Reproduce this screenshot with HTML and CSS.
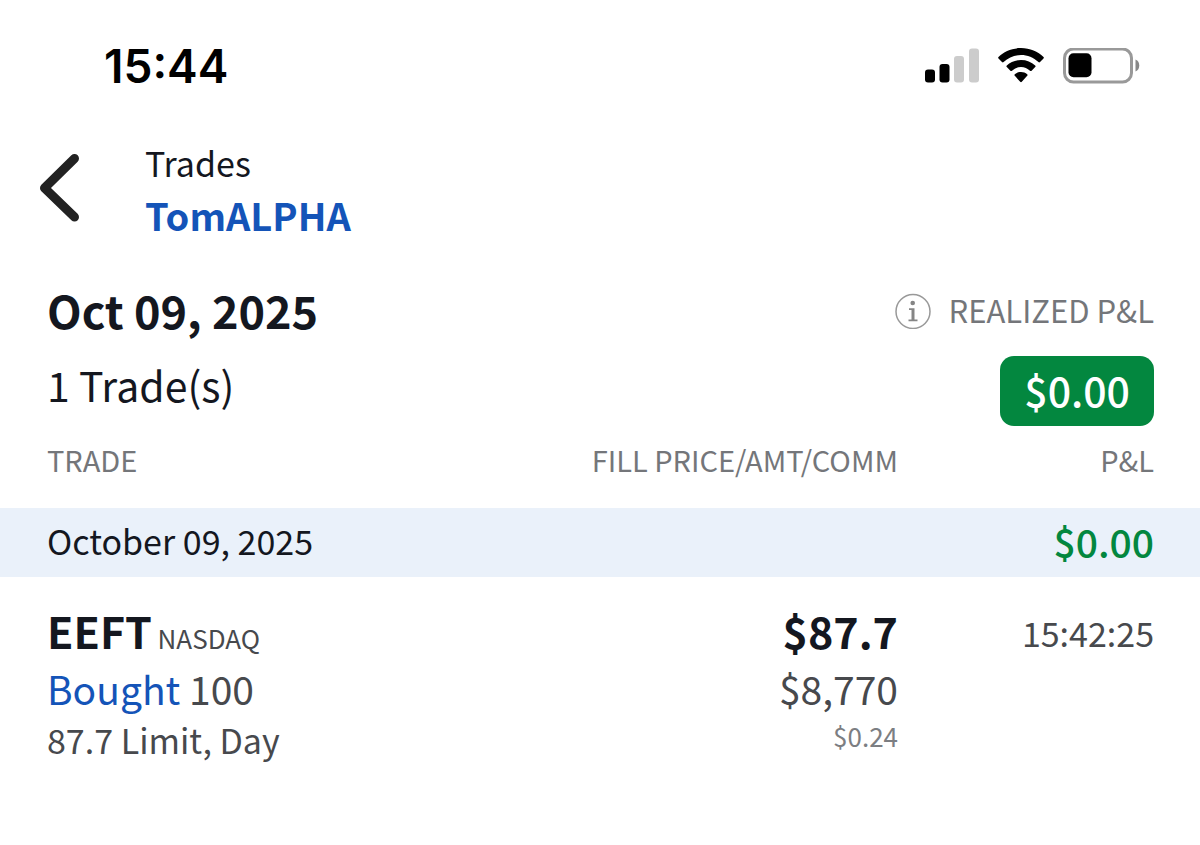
FILE: index.html
```html
<!DOCTYPE html>
<html lang="en">
<head>
<meta charset="utf-8">
<meta name="viewport" content="width=device-width, initial-scale=1">
<title>Trades</title>
<link rel="stylesheet" href="styles.css">
</head>
<body>
<div class="status-bar">
  <time class="clock">15:44</time>
  <div class="status-icons">
    <svg width="54" height="36" viewBox="0 0 54 36" role="img" aria-label="Signal: 2 of 4 bars">
      <rect x="0" y="21.500" width="10" height="13" rx="3"/>
      <rect x="14.500" y="16" width="10" height="18.500" rx="3"/>
      <rect x="29" y="8" width="10" height="26.500" rx="3" fill="#cccccc"/>
      <rect x="44" y="0.500" width="10" height="34" rx="3" fill="#cccccc"/>
    </svg>
    <svg width="46" height="36" viewBox="0 0 46 36" role="img" aria-label="Wi-Fi">
      <path d="M23 0C14 0 6 3.500 0.500 9Q-0.200 9.700 0.500 10.400L4 14Q4.800 14.800 5.600 14C10.500 9.500 16.500 7 23 7S35.500 9.500 40.400 14Q41.200 14.800 42 14L45.500 10.400Q46.200 9.700 45.500 9C40 3.500 32 0 23 0Z"/>
      <path d="M23 12C17.500 12 12.500 14 8.800 17.500Q8 18.300 8.800 19.100L12.400 22.700Q13.200 23.500 14 22.700C16.500 20.500 19.600 19 23 19S29.500 20.500 32 22.700Q32.800 23.500 33.600 22.700L37.200 19.100Q38 18.300 37.200 17.500C33.500 14 28.500 12 23 12Z"/>
      <path d="M23 24C20.500 24 18.500 24.800 16.800 26.200Q16 27 16.800 27.800L22.200 33.800Q23 34.600 23.800 33.800L29.200 27.800Q30 27 29.200 26.200C27.500 24.800 25.500 24 23 24Z"/>
    </svg>
    <svg width="77" height="36" viewBox="0 0 77 36" role="img" aria-label="Battery: 35%">
      <rect x="1.500" y="1" width="67" height="33" rx="9" fill="none" stroke="#999999" stroke-width="3" />
      <rect x="5.500" y="5.300" width="23" height="24" rx="5"/>
      <path d="M72.500 11.500C77.500 13 77.500 22 72.500 23.500Z" fill="#888888"/>
    </svg>
  </div>
</div>

<header class="app-header">
  <button class="back" type="button" aria-label="Back">
    <svg width="40" height="68" viewBox="0 0 40 68" aria-hidden="true">
      <path d="M35.500 4.500L5.500 34L35.500 63" fill="none" stroke="#222222" stroke-width="9" stroke-linecap="round" stroke-linejoin="round"/>
    </svg>
  </button>
  <div class="titles">
    <h1 class="title">Trades</h1>
    <a class="account" href="#">TomALPHA</a>
  </div>
</header>

<main>
  <section class="summary">
    <div class="summary-left">
      <h2 class="date">Oct 09, 2025</h2>
      <p class="count">1 Trade(s)</p>
    </div>
    <div class="summary-right">
      <div class="realized">
        <button class="info" type="button" aria-label="About realized P&amp;L">
          <svg width="36" height="38" viewBox="0 0 36 38" aria-hidden="true">
            <circle cx="18" cy="20.500" r="17" fill="none" stroke="#999999" stroke-width="1.500"/>
            <circle cx="17.700" cy="12" r="2.300" fill="#858585"/>
            <path d="M14 17.200H19.500V28.500H22.500V30.300H13.500V28.500H16.500V19H14Z" fill="#858585"/>
          </svg>
        </button>
        <span>REALIZED P&amp;L</span>
      </div>
      <div class="badge">$0.00</div>
    </div>
  </section>

  <table class="trades">
    <thead>
      <tr class="columns">
        <th scope="col">TRADE</th>
        <th scope="col" class="num">FILL PRICE/AMT/COMM</th>
        <th scope="col" class="num">P&amp;L</th>
      </tr>
    </thead>
    <tbody>
      <tr class="day">
        <th scope="rowgroup" colspan="2">October 09, 2025</th>
        <td class="num day-total">$0.00</td>
      </tr>
      <tr class="trade">
        <td>
          <div class="line-main"><span class="symbol">EEFT</span> <span class="exchange">NASDAQ</span></div>
          <div class="line-mid"><span class="side">Bought</span> 100</div>
          <div class="order">87.7 Limit, Day</div>
        </td>
        <td class="num">
          <div class="line-main price">$87.7</div>
          <div class="line-mid">$8,770</div>
          <div class="commission">$0.24</div>
        </td>
        <td class="num filled">15:42:25</td>
      </tr>
    </tbody>
  </table>
</main>
</body>
</html>
```
FILE: styles.css
```css
* {
  box-sizing: border-box;
}

body {
  margin: 0;
  background: #ffffff;
  color: #14171f;
  font-family: "Noto Sans CJK SC", "Noto Sans", sans-serif;
}

h1, h2, p {
  margin: 0;
  font-weight: 400;
}

button {
  display: flex;
  padding: 0;
  border: 0;
  background: none;
  cursor: pointer;
}

svg {
  display: block;
}

.status-bar {
  display: flex;
  align-items: center;
  justify-content: space-between;
  padding: 36px 60px 0 104px;
}

.clock {
  color: #000000;
  font: 600 46px/60px Inter, sans-serif;
}

.status-icons {
  display: flex;
  gap: 19px;
}

.app-header {
  display: flex;
  align-items: center;
  gap: 66px;
  padding: 40px 39px;
}

.title {
  font-size: 34px;
  line-height: 53px;
}

.account {
  display: block;
  color: #1454b8;
  font-size: 38px;
  font-weight: 600;
  line-height: 51px;
  text-decoration: none;
}

.summary {
  display: flex;
  justify-content: space-between;
  padding: 0 46px 0 47px;
}

.date {
  font-size: 45px;
  font-weight: 600;
  line-height: 60px;
}

.count {
  margin-top: 14px;
  font-size: 41px;
  line-height: 60px;
}

.summary-right {
  display: flex;
  flex-direction: column;
  align-items: flex-end;
  gap: 16px;
}

.realized {
  display: flex;
  align-items: center;
  gap: 18px;
  color: #74767a;
  font-size: 31px;
  line-height: 60px;
}

.badge {
  padding: 0 24px 4px;
  border-radius: 14px;
  background: #03873f;
  color: #ffffff;
  font-size: 41px;
  font-weight: 500;
  line-height: 66px;
}

.trades {
  width: 100%;
  margin-top: 13px;
  border-collapse: collapse;
}

.trades th,
.trades td {
  padding: 0 0 0 47px;
  font-weight: 400;
  text-align: left;
  vertical-align: top;
}

.trades .num {
  padding-left: 0;
  text-align: right;
}

.trades .num:last-child {
  width: 302px;
  padding-right: 46px;
}

.trades .columns th {
  padding-bottom: 29px;
  color: #74767a;
  font-size: 29px;
  line-height: 40px;
}

.trades .day {
  background: #eaf1fa;
}

.trades .day th {
  padding-bottom: 3px;
  font-size: 34px;
  line-height: 66px;
}

.trades .day-total {
  color: #03873f;
  font-size: 39px;
  font-weight: 500;
  line-height: 66px;
}

.trades .trade td {
  padding-top: 23px;
  color: #47494d;
}

.trade .line-main {
  font-size: 43px;
  line-height: 60px;
}

.trade .symbol,
.trade .price {
  color: #14171f;
  font-weight: 600;
}

.exchange {
  margin-left: -4px;
  font-size: 26px;
  line-height: 1;
}

.line-mid {
  font-size: 39px;
  line-height: 56px;
}

.side {
  color: #1454b8;
}

.order {
  font-size: 34px;
  line-height: 48px;
}

.commission {
  color: #7c7e82;
  font-size: 26px;
  line-height: 40px;
}

.trades .filled {
  font-size: 34px;
  line-height: 66px;
}
```
